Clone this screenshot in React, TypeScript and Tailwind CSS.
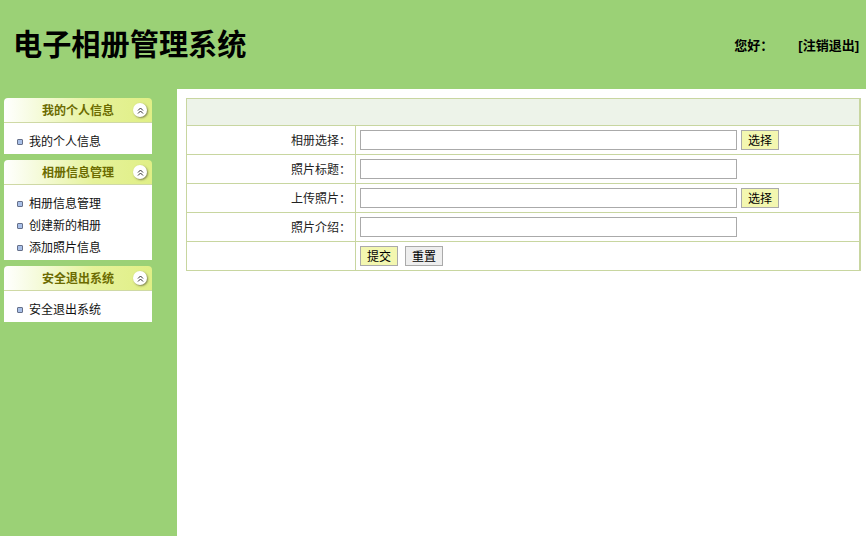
const font = "font-['Liberation_Sans','Noto_Sans_CJK_SC',sans-serif]";

const menus = [
  { title: "我的个人信息", items: ["我的个人信息"] },
  { title: "相册信息管理", items: ["相册信息管理", "创建新的相册", "添加照片信息"] },
  { title: "安全退出系统", items: ["安全退出系统"] },
];

const rows = [
  { label: "相册选择：", pick: true },
  { label: "照片标题：", pick: false },
  { label: "上传照片：", pick: true },
  { label: "照片介绍：", pick: false },
];

function Chevrons() {
  return (
    <span className="flex h-[14px] w-[14px] items-center justify-center rounded-full bg-white shadow-[1px_1px_2px_rgba(90,90,60,0.7)]">
      <svg width="9" height="9" viewBox="0 0 9 9" fill="none" stroke="#333" strokeWidth="1">
        <path d="M2 4.5 L4.5 2 L7 4.5" />
        <path d="M2 7.5 L4.5 5 L7 7.5" />
      </svg>
    </span>
  );
}

function Menu({ title, items }: { title: string; items: string[] }) {
  return (
    <div className="w-[148px]">
      <div className="flex h-[25px] items-center rounded-t-[4px] border-b border-[#cfd9a5] bg-gradient-to-r from-white via-[#e6f29a] via-60% to-[#e0ef86] pr-[5px]">
        <span className="flex-1 pt-[2px] pl-[19px] text-center text-[12px] font-bold text-[#6b6b00]">{title}</span>
        <Chevrons />
      </div>
      <ul className="bg-white pt-[8px] pb-[1px]">
        {items.map((item) => (
          <li key={item} className="flex h-[22px] items-center pl-[13px] text-[12px] text-[#111]">
            <span className="mr-[6px] mb-[1px] h-[6px] w-[6px] rounded-[1px] border border-[#66708a] bg-[#a9c0e8]" />
            {item}
          </li>
        ))}
      </ul>
    </div>
  );
}

function PickButton({ children, gray }: { children: string; gray?: boolean }) {
  return (
    <button
      type="button"
      className={`h-[20px] w-[38px] border border-[#aaaaaa] pt-[1px] text-[12px] leading-none text-black ${gray ? "bg-[#eeeeee]" : "bg-[#f3f7b0]"}`}
    >
      {children}
    </button>
  );
}

export default function App() {
  return (
    <div className={`flex h-[536px] w-[866px] flex-col overflow-hidden bg-[#9bd176] ${font}`}>
      <header className="flex h-[89px] shrink-0 items-center justify-between pt-[2px] pr-[7px] pl-[13px]">
        <h1 className="text-[29.2px] font-bold text-black">电子相册管理系统</h1>
        <div className="flex text-[13px] font-bold text-black">
          <span className="mr-[25px]">您好：</span>
          <span>[注销退出]</span>
        </div>
      </header>
      <div className="flex min-h-0 flex-1">
        <aside className="flex w-[177px] shrink-0 flex-col gap-[6px] pt-[9px] pl-[4px]">
          {menus.map((m) => (
            <Menu key={m.title} title={m.title} items={m.items} />
          ))}
        </aside>
        <main className="flex-1 bg-white pt-[9px] pl-[9px]">
          <table className="w-[675px] table-fixed border-collapse border-r-2 border-[#c8d6a0] text-[12px] text-[#222]">
            <colgroup>
              <col className="w-[169px]" />
              <col />
            </colgroup>
            <tbody>
              <tr className="h-[27px]">
                <td colSpan={2} className="border border-[#c8d6a0] bg-[#edf3e9]" />
              </tr>
              {rows.map((r) => (
                <tr key={r.label} className="h-[29px]">
                  <td className="border border-[#c8d6a0] pt-[2px] pr-[4px] text-right">{r.label}</td>
                  <td className="border border-[#c8d6a0] pl-[4px]">
                    <div className="flex items-center gap-[4px]">
                      <input className="h-[20px] w-[377px] border border-[#aaaaaa] bg-white" />
                      {r.pick && <PickButton>选择</PickButton>}
                    </div>
                  </td>
                </tr>
              ))}
              <tr className="h-[29px]">
                <td className="border border-[#c8d6a0]" />
                <td className="border border-[#c8d6a0] pl-[4px]">
                  <div className="flex items-center gap-[7px]">
                    <PickButton>提交</PickButton>
                    <PickButton gray>重置</PickButton>
                  </div>
                </td>
              </tr>
            </tbody>
          </table>
        </main>
      </div>
    </div>
  );
}
